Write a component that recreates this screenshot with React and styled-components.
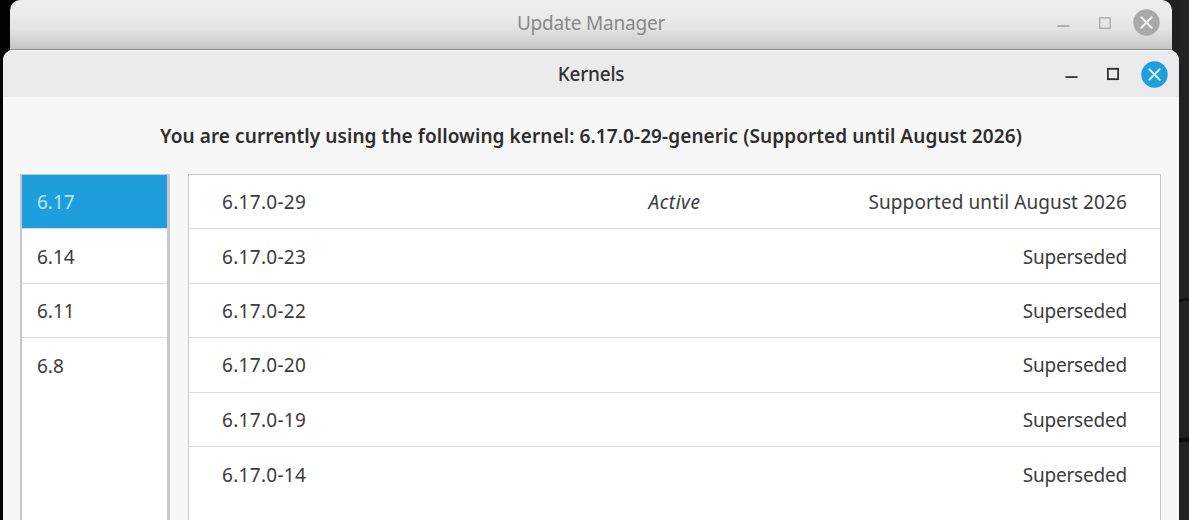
import React, { useState } from 'react';
import styled, { createGlobalStyle } from 'styled-components';

const SERIES = ['6.17', '6.14', '6.11', '6.8'];

const KERNELS = [
    { version: '6.17.0-29', active: true, status: 'Supported until August 2026' },
    { version: '6.17.0-23', status: 'Superseded' },
    { version: '6.17.0-22', status: 'Superseded' },
    { version: '6.17.0-20', status: 'Superseded' },
    { version: '6.17.0-19', status: 'Superseded' },
    { version: '6.17.0-14', status: 'Superseded' },
];

const WindowControls = ({ focused }) => {
    const stroke = focused ? '#2b2b2b' : '#a6a6a6';
    return (
        <Controls>
            <svg width="13" height="14" viewBox="0 0 13 14">
                <rect x="0.5" y="9.2" width="12" height="1.7" fill={stroke} />
            </svg>
            <svg width="12" height="14" viewBox="0 0 12 14">
                <rect
                    x="0.8"
                    y="1.8"
                    width="10.4"
                    height="10.4"
                    fill="none"
                    stroke={stroke}
                    strokeWidth={focused ? 1.8 : 1.3}
                />
            </svg>
            <svg width="27" height="27" viewBox="0 0 27 27">
                <circle cx="13.5" cy="13.5" r="13.2" fill={focused ? '#1f9ede' : '#a9a9a9'} />
                <path
                    d="M8.3 8.3l10.4 10.4M18.7 8.3L8.3 18.7"
                    stroke={focused ? '#d5f1ff' : '#f4f4f4'}
                    strokeWidth="2"
                    strokeLinecap="round"
                />
            </svg>
        </Controls>
    );
};

const App = () => {
    const [selected, setSelected] = useState('6.17');

    return (
        <Desktop>
            <GlobalStyle />
            <Crease $top={299} />
            <Crease $top={438} $thick />
            <BackWindow>
                <TitleBar>
                    <Title>Update Manager</Title>
                    <WindowControls focused={false} />
                </TitleBar>
            </BackWindow>
            <FrontWindow>
                <TitleBar $focused>
                    <Title $focused>Kernels</Title>
                    <WindowControls focused />
                </TitleBar>
                <Heading>
                    You are currently using the following kernel: 6.17.0-29-generic (Supported until August 2026)
                </Heading>
                <Panels>
                    <SeriesList>
                        {SERIES.map((name) => (
                            <SeriesItem
                                key={name}
                                $selected={name === selected}
                                onClick={() => setSelected(name)}
                            >
                                {name}
                            </SeriesItem>
                        ))}
                    </SeriesList>
                    <KernelList>
                        {KERNELS.map((kernel) => (
                            <KernelRow key={kernel.version}>
                                <Version>{kernel.version}</Version>
                                <Active>{kernel.active && 'Active'}</Active>
                                <Status $supported={kernel.active}>{kernel.status}</Status>
                            </KernelRow>
                        ))}
                    </KernelList>
                </Panels>
            </FrontWindow>
        </Desktop>
    );
};

const GlobalStyle = createGlobalStyle`
    * {
        box-sizing: border-box;
    }

    body {
        margin: 0;
        overflow: hidden;
        font-family: "Noto Sans", "Open Sans", sans-serif;
        font-size: 19px;
        color: #3b3b3b;
    }
`;

const Desktop = styled.div`
    position: relative;
    width: 1189px;
    height: 520px;
    overflow: hidden;
    background: linear-gradient(90deg, #030304 0 1100px, #202224 1180px);
`;

const Crease = styled.div`
    position: absolute;
    top: ${({ $top }) => $top}px;
    right: -4px;
    width: 20px;
    height: ${({ $thick }) => ($thick ? 4 : 2)}px;
    background: #0b0c0d;
    transform: rotate(-7deg);
`;

const BackWindow = styled.div`
    position: absolute;
    top: 0;
    left: 10px;
    width: 1162px;
    height: 52px;
    border-radius: 10px 10px 0 0;
    background: linear-gradient(#ededee 0, #ebebec 16px, #e4e4e5 28px, #d4d4d5 40px, #c4c4c5 49px, #8e8e8f 49px);
`;

const FrontWindow = styled.div`
    position: absolute;
    top: 50px;
    left: 3px;
    display: flex;
    flex-direction: column;
    width: 1176px;
    height: 490px;
    border-radius: 10px 10px 0 0;
    background: #f7f7f7;
    overflow: hidden;
`;

const TitleBar = styled.div`
    display: grid;
    grid-template-columns: 1fr auto 1fr;
    align-items: center;
    flex: none;
    height: ${({ $focused }) => ($focused ? 47 : 45)}px;
    padding: ${({ $focused }) => ($focused ? '1px 11px 0' : '0 12px')};
    background: ${({ $focused }) => ($focused ? '#ebebed' : 'transparent')};
    box-shadow: ${({ $focused }) => ($focused ? 'inset 0 1px #f8f8f8' : 'none')};
`;

const Title = styled.div`
    grid-column: 2;
    font-size: 19px;
    font-weight: ${({ $focused }) => ($focused ? 500 : 400)};
    line-height: 26px;
    letter-spacing: -0.2px;
    color: ${({ $focused }) => ($focused ? '#303030' : '#888')};
`;

const Controls = styled.div`
    display: flex;
    align-items: center;
    justify-content: flex-end;
    gap: 22px;

    svg {
        display: block;
    }

    svg:first-child {
        margin-right: 7px;
    }
`;

const Heading = styled.div`
    flex: none;
    height: 77px;
    line-height: 78px;
    font-size: 19px;
    font-weight: 600;
    letter-spacing: 0.08px;
    text-align: center;
    white-space: nowrap;
    color: #2d2d2d;
`;

const Panels = styled.div`
    display: flex;
    flex: 1;
    gap: 18px;
    padding: 0 18px 0 17px;
`;

const SeriesList = styled.div`
    width: 150px;
    border: solid #c8c8ca;
    border-width: 1px 3px 0 2px;
    background: #fff;
`;

const SeriesItem = styled.div`
    display: flex;
    align-items: center;
    height: 54.4px;
    padding: 1px 15px 0;
    border-bottom: 1px solid #dcdcdd;
    background: ${({ $selected }) => ($selected ? '#1f9ede' : '#fff')};
    color: ${({ $selected }) => ($selected ? '#b3e7ff' : 'inherit')};
    cursor: pointer;

    &:last-child {
        border-bottom: none;
    }
`;

const KernelList = styled.div`
    flex: 1;
    border: 1px solid #c8c8ce;
    border-bottom: none;
    background: #fff;
`;

const KernelRow = styled.div`
    display: grid;
    grid-template-columns: 1fr auto 1fr;
    align-items: center;
    height: 54.4px;
    padding: 1px 33px 0;
    border-bottom: 1px solid #dcdcdd;

    &:last-child {
        border-bottom: none;
    }
`;

const Version = styled.span`
    letter-spacing: 0.3px;
`;

const Active = styled.span`
    font-style: italic;
    letter-spacing: 0.5px;
`;

const Status = styled.span`
    text-align: right;
    white-space: nowrap;
    letter-spacing: ${({ $supported }) => ($supported ? 0.1 : -0.2)}px;
`;

export default App;
